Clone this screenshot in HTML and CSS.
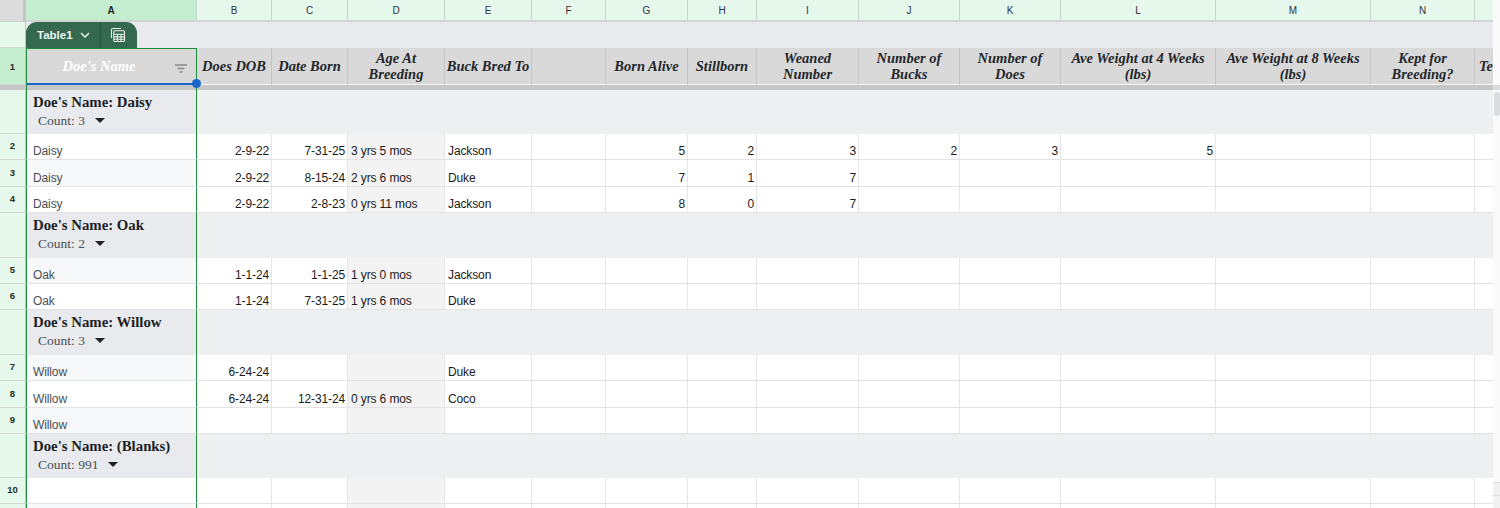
FILE: index.html
```html
<!DOCTYPE html>
<html lang="en">
<head>
<meta charset="utf-8">
<title>Table1</title>
<link rel="stylesheet" href="styles.css">
</head>
<body>
<div class="sheet">
<div class="viewport">
<table class="grid">
<colgroup>
<col class="w-r"><col class="w-a"><col class="w-b"><col class="w-c"><col class="w-d"><col class="w-e"><col class="w-f"><col class="w-g"><col class="w-h"><col class="w-i"><col class="w-j"><col class="w-k"><col class="w-l"><col class="w-m"><col class="w-n"><col class="w-o">
</colgroup>
<tr class="h-col">
<th class="corner"></th><th class="ch sel">A</th><th class="ch">B</th><th class="ch">C</th><th class="ch">D</th><th class="ch">E</th><th class="ch">F</th><th class="ch">G</th><th class="ch">H</th><th class="ch">I</th><th class="ch">J</th><th class="ch">K</th><th class="ch">L</th><th class="ch">M</th><th class="ch">N</th><th class="ch"></th>
</tr>
<tr class="h-tab">
<th class="rh"></th>
<td class="tabcell" colspan="15">
<div class="tab">
<span class="tab-name">Table1</span>
<svg class="chev" width="10" height="6" viewBox="0 0 10 6"><path d="M1 1l4 4 4-4" fill="none" stroke="#fff" stroke-width="1.3"/></svg>
<span class="tab-sep"></span>
<svg class="calc" width="16" height="16" viewBox="0 0 16 16" fill="none" stroke="#e6efe9" stroke-width="1.1"><path d="M1.5 11V2.5a1 1 0 0 1 1-1H11"/><rect x="3.8" y="3.8" width="10.7" height="10.7" rx="1"/><path d="M3.8 7.2h10.7M3.8 9.9h10.7M3.8 12.3h10.7M7.4 7.2v7.3M11 7.2v7.3"/></svg>
</div>
</td>
</tr>
<tr class="h-head">
<th class="rh sel">1</th>
<th class="hd hd-a"><span class="hd-a-text">Doe's Name</span>
<svg class="filter" width="12" height="9" viewBox="0 0 12 9"><path d="M0 1h12M2.5 4.5h7M4.5 8h3" stroke="#8a8a8a" stroke-width="1.3"/></svg>
<span class="handle"></span></th>
<th class="hd">Does DOB</th><th class="hd">Date Born</th><th class="hd">Age At Breeding</th><th class="hd hd-one">Buck Bred To</th><th class="hd"></th><th class="hd">Born Alive</th><th class="hd">Stillborn</th><th class="hd">Weaned Number</th><th class="hd">Number of Bucks</th><th class="hd">Number of Does</th><th class="hd">Ave Weight at 4 Weeks (lbs)</th><th class="hd">Ave Weight at 8 Weeks (lbs)</th><th class="hd">Kept for Breeding?</th><th class="hd hd-clip">Te</th>
</tr>
<tr class="h-div"><th class="rh rh-div"></th><td class="div-a"></td><td class="div-rest" colspan="14"></td></tr>

<tr class="h-g44">
<th class="rh"></th>
<td class="grp-a"><div class="grp-title">Doe's Name: Daisy</div><div class="grp-count">Count: 3 <span class="caret"></span></div></td>
<td class="grp-rest" colspan="14"></td>
</tr>
<tr class="h-26">
<th class="rh">2</th><td class="a">Daisy</td><td class="n">2-9-22</td><td class="n">7-31-25</td><td class="d">3 yrs 5 mos</td><td class="t">Jackson</td><td></td><td class="n">5</td><td class="n">2</td><td class="n">3</td><td class="n">2</td><td class="n">3</td><td class="n">5</td><td></td><td></td><td></td>
</tr>
<tr class="h-27">
<th class="rh">3</th><td class="a alt">Daisy</td><td class="n">2-9-22</td><td class="n">8-15-24</td><td class="d">2 yrs 6 mos</td><td class="t">Duke</td><td></td><td class="n">7</td><td class="n">1</td><td class="n">7</td><td></td><td></td><td></td><td></td><td></td><td></td>
</tr>
<tr class="h-26">
<th class="rh">4</th><td class="a">Daisy</td><td class="n">2-9-22</td><td class="n">2-8-23</td><td class="d">0 yrs 11 mos</td><td class="t">Jackson</td><td></td><td class="n">8</td><td class="n">0</td><td class="n">7</td><td></td><td></td><td></td><td></td><td></td><td></td>
</tr>

<tr class="h-g45">
<th class="rh"></th>
<td class="grp-a"><div class="grp-title">Doe's Name: Oak</div><div class="grp-count">Count: 2 <span class="caret"></span></div></td>
<td class="grp-rest" colspan="14"></td>
</tr>
<tr class="h-26">
<th class="rh">5</th><td class="a alt">Oak</td><td class="n">1-1-24</td><td class="n">1-1-25</td><td class="d">1 yrs 0 mos</td><td class="t">Jackson</td><td></td><td></td><td></td><td></td><td></td><td></td><td></td><td></td><td></td><td></td>
</tr>
<tr class="h-26">
<th class="rh">6</th><td class="a">Oak</td><td class="n">1-1-24</td><td class="n">7-31-25</td><td class="d">1 yrs 6 mos</td><td class="t">Duke</td><td></td><td></td><td></td><td></td><td></td><td></td><td></td><td></td><td></td><td></td>
</tr>

<tr class="h-g45">
<th class="rh"></th>
<td class="grp-a"><div class="grp-title">Doe's Name: Willow</div><div class="grp-count">Count: 3 <span class="caret"></span></div></td>
<td class="grp-rest" colspan="14"></td>
</tr>
<tr class="h-26">
<th class="rh">7</th><td class="a alt">Willow</td><td class="n">6-24-24</td><td></td><td class="d"></td><td class="t">Duke</td><td></td><td></td><td></td><td></td><td></td><td></td><td></td><td></td><td></td><td></td>
</tr>
<tr class="h-27">
<th class="rh">8</th><td class="a">Willow</td><td class="n">6-24-24</td><td class="n">12-31-24</td><td class="d">0 yrs 6 mos</td><td class="t">Coco</td><td></td><td></td><td></td><td></td><td></td><td></td><td></td><td></td><td></td><td></td>
</tr>
<tr class="h-26">
<th class="rh">9</th><td class="a alt">Willow</td><td></td><td></td><td class="d"></td><td></td><td></td><td></td><td></td><td></td><td></td><td></td><td></td><td></td><td></td><td></td>
</tr>

<tr class="h-g44">
<th class="rh"></th>
<td class="grp-a"><div class="grp-title">Doe's Name: (Blanks)</div><div class="grp-count">Count: 991 <span class="caret"></span></div></td>
<td class="grp-rest" colspan="14"></td>
</tr>
<tr class="h-26">
<th class="rh">10</th><td class="a"></td><td></td><td></td><td class="d"></td><td></td><td></td><td></td><td></td><td></td><td></td><td></td><td></td><td></td><td></td><td></td>
</tr>
<tr class="h-26">
<th class="rh"></th><td class="a alt"></td><td></td><td></td><td class="d"></td><td></td><td></td><td></td><td></td><td></td><td></td><td></td><td></td><td></td><td></td><td></td>
</tr>
</table>
</div>
<div class="scrollbar">
<div class="sb-band"></div>
<div class="sb-thumb"></div>
<div class="sb-space"></div>
<div class="sb-btn"></div>
<div class="sb-btn"></div>
</div>
</div>
</body>
</html>
```
FILE: styles.css
```css
* { box-sizing: border-box; }
html, body { margin: 0; height: 100%; overflow: hidden; background: #fff; }
.sheet { display: flex; width: 1500px; height: 508px; }
.viewport { width: 1493px; height: 508px; overflow: hidden; flex: none; }

.grid {
  table-layout: fixed;
  border-collapse: separate;
  border-spacing: 0;
  width: 1514px;
  font: 12px "Liberation Sans", Arial, sans-serif;
  letter-spacing: -0.12px;
  color: #1a1a1a;
}
.w-r { width: 26px; } .w-a { width: 171px; } .w-b { width: 75px; } .w-c { width: 76px; }
.w-d { width: 97px; } .w-e { width: 87px; } .w-f { width: 74px; } .w-g { width: 82px; }
.w-h { width: 69px; } .w-i { width: 102px; } .w-j { width: 101px; } .w-k { width: 101px; }
.w-l { width: 155px; } .w-m { width: 155px; } .w-n { width: 104px; } .w-o { width: 39px; }

.h-col { height: 22px; }
.h-tab { height: 26px; }
.h-head { height: 37px; }
.h-div { height: 5px; }
.h-g44 { height: 44px; }
.h-g45 { height: 45px; }
.h-26 { height: 26px; }
.h-27 { height: 27px; }

td, th { padding: 0; overflow: hidden; white-space: nowrap; }
td { border-right: 1px solid #e6e6e6; border-bottom: 1px solid #e3e3e3; vertical-align: bottom; padding-bottom: 1px; }

.corner { background: #dcdcdc; border-right: 3px solid #c4c4c4; border-bottom: 1px solid #c9d3cc; }
.ch {
  background: #e6f7ec;
  border-right: 1px solid #c6d6cc;
  border-bottom: 2px solid #cfd6d1;
  font: 400 10px "Liberation Sans", Arial, sans-serif;
  letter-spacing: 0;
  color: #303336;
  text-align: center;
}
.ch.sel { background: #c5eed0; font-weight: 700; color: #1f2a22; }

.rh {
  background: #e6f7ec;
  border-right: 1px solid #b9c9bf;
  border-bottom: 1px solid #cfd8d2;
  padding-bottom: 2px;
  font: 700 9.5px "Liberation Sans", Arial, sans-serif;
  letter-spacing: 0;
  color: #262d28;
  text-align: center;
}
.rh.sel { background: #c5eed0; padding-bottom: 0; }
.rh-div { background: #c6c6c6; border-bottom: 0; border-right: 0; padding-bottom: 0; }

.tabcell {
  background: #e8eaed;
  border: 0;
  padding: 0;
  vertical-align: bottom;
}
.tab {
  display: flex;
  align-items: center;
  width: 111px;
  height: 26px;
  background: #34684f;
  border-radius: 11px 11px 0 0;
  color: #fff;
  padding-left: 11px;
  letter-spacing: 0;
}
.tab-name { font: 700 11.5px "Liberation Sans", Arial, sans-serif; color: #eef4f0; }
.chev { margin-left: 7px; }
.tab-sep { width: 1px; height: 26px; background: #25503b; margin-left: 10px; }
.calc { margin-left: 9px; }

.hd {
  background: #d9d9d9;
  border-right: 1px solid #c4c4c4;
  border-bottom: 1px solid #f4f4f4;
  font: italic 700 14.5px/16px "Liberation Serif", "Times New Roman", serif;
  letter-spacing: 0;
  color: #23262b;
  text-align: center;
  white-space: normal;
  padding: 0 2px;
  overflow: hidden;
}
.hd-one { white-space: nowrap; padding: 0; }
.hd-clip { white-space: nowrap; text-align: left; padding-left: 4px; }
.hd-a {
  position: relative;
  overflow: visible;
  border-top: 1px solid #1e8e3e;
  border-left: 1px solid #1e8e3e;
  border-right: 1px solid #1e8e3e;
  border-bottom: 2px solid #1a66c9;
  padding: 0 29px 0 4px;
  color: #fff;
}
.hd-a-text { font-size: 14.5px; }
.filter { position: absolute; right: 9px; top: 15px; }
.handle {
  position: absolute;
  right: -5px;
  bottom: -5px;
  width: 9px;
  height: 9px;
  border-radius: 50%;
  background: #1a66c9;
  z-index: 2;
}

.div-a, .div-rest { background: #c6c6c6; border: 0; padding: 0; }
.div-a { border-left: 1px solid #1e8e3e; border-right: 1px solid #1e8e3e; }

.grp-a {
  background: #e8eaed;
  border: 0;
  border-left: 1px solid #1e8e3e;
  border-right: 1px solid #1e8e3e;
  padding: 3px 6px 4px 6px;
  vertical-align: top;
  font-family: "Liberation Serif", "Times New Roman", serif;
  letter-spacing: 0;
}
.grp-rest { background: #eeeff1; border: 0; border-right: 0; padding: 0; }
.grp-title { font-size: 14.8px; font-weight: 700; line-height: 19px; color: #1c1f24; }
.grp-count { font-size: 13.5px; line-height: 17px; padding-left: 5px; color: #4a4f55; display: flex; align-items: center; gap: 10px; }
.caret { width: 0; height: 0; border-left: 5px solid transparent; border-right: 5px solid transparent; border-top: 5px solid #202124; }

.a {
  background: #fff;
  border-left: 1px solid #1e8e3e;
  border-right: 1px solid #1e8e3e;
  border-bottom-color: #e3e3e3;
  padding-left: 6px;
  color: #4a4f55;
}
.a.alt { background: #f6f8f9; }
.n { text-align: right; padding-right: 2px; }
.d { background: #f3f3f3; padding-left: 3px; }
.t { padding-left: 3px; }

.scrollbar { width: 7px; flex: none; display: flex; flex-direction: column; background: #fafafa; }
.sb-band { height: 5px; margin-top: 85px; background: #d9dadc; flex: none; }
.sb-thumb { height: 24px; margin: 2px 0 0 1px; border-radius: 3px; background: #dadce0; flex: none; }
.sb-space { flex: 1; }
.sb-btn { height: 13px; border-top: 1px solid #dfdfdf; background: #f1f1f1; flex: none; }
```
